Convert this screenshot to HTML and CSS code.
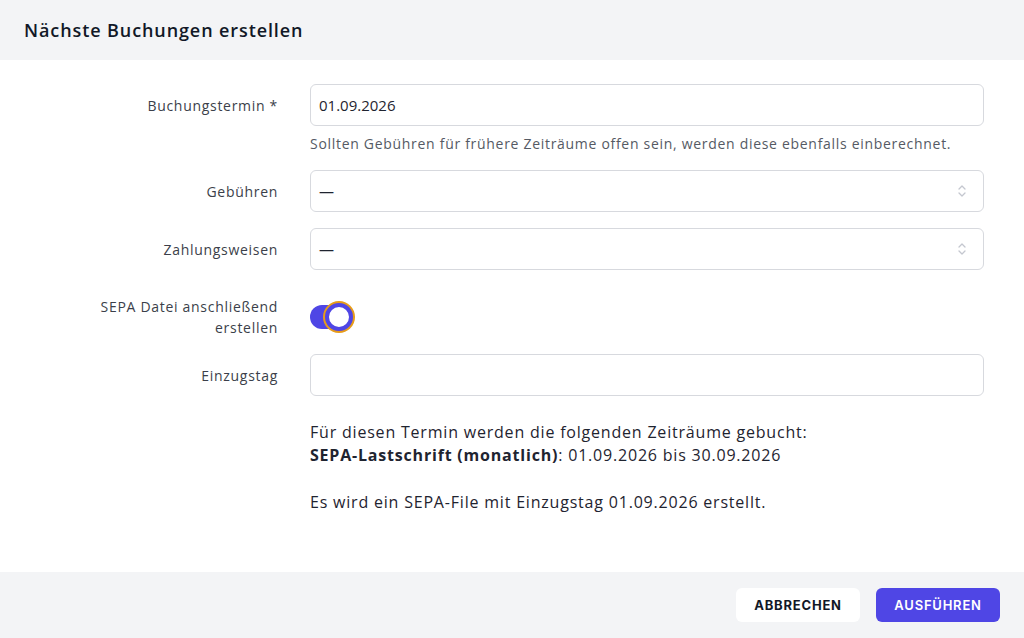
FILE: index.html
```html
<!DOCTYPE html>
<html lang="de">
<head>
  <meta charset="UTF-8">
  <title>Nächste Buchungen erstellen</title>
  <link rel="stylesheet" href="styles.css">
</head>
<body>
  <div class="dialog">
    <header class="dialog-header">
      <h2>Nächste Buchungen erstellen</h2>
    </header>

    <div class="dialog-body">
      <div class="form-row">
        <label class="form-label" for="termin">Buchungstermin *</label>
        <div class="form-field">
          <input id="termin" class="input" type="text" value="01.09.2026">
          <p class="hint">Sollten Gebühren für frühere Zeiträume offen sein, werden diese ebenfalls einberechnet.</p>
        </div>
      </div>

      <div class="form-row">
        <label class="form-label">Gebühren</label>
        <div class="form-field">
          <div class="select">
            <span>—</span>
            <svg class="chevrons" width="10" height="16" viewBox="0 0 10 16">
              <path d="M2 6 L5 3 L8 6" fill="none" stroke="#c4c7cf" stroke-width="1.3" stroke-linecap="round" stroke-linejoin="round"/>
              <path d="M2 10 L5 13 L8 10" fill="none" stroke="#c4c7cf" stroke-width="1.3" stroke-linecap="round" stroke-linejoin="round"/>
            </svg>
          </div>
        </div>
      </div>

      <div class="form-row">
        <label class="form-label">Zahlungsweisen</label>
        <div class="form-field">
          <div class="select">
            <span>—</span>
            <svg class="chevrons" width="10" height="16" viewBox="0 0 10 16">
              <path d="M2 6 L5 3 L8 6" fill="none" stroke="#c4c7cf" stroke-width="1.3" stroke-linecap="round" stroke-linejoin="round"/>
              <path d="M2 10 L5 13 L8 10" fill="none" stroke="#c4c7cf" stroke-width="1.3" stroke-linecap="round" stroke-linejoin="round"/>
            </svg>
          </div>
        </div>
      </div>

      <div class="form-row toggle-row">
        <label class="form-label">SEPA Datei anschließend<br>erstellen</label>
        <div class="form-field">
          <span class="toggle">
            <span class="toggle-knob"></span>
          </span>
        </div>
      </div>

      <div class="form-row">
        <label class="form-label">Einzugstag</label>
        <div class="form-field">
          <input class="input" type="text" value="">
        </div>
      </div>

      <div class="form-row summary-row">
        <div></div>
        <div class="summary">
          <p>Für diesen Termin werden die folgenden Zeiträume gebucht:<br>
            <strong>SEPA-Lastschrift (monatlich)</strong>: 01.09.2026 bis 30.09.2026</p>
          <p>Es wird ein SEPA-File mit Einzugstag 01.09.2026 erstellt.</p>
        </div>
      </div>
    </div>

    <footer class="dialog-footer">
      <button class="btn btn-secondary">Abbrechen</button>
      <button class="btn btn-primary">Ausführen</button>
    </footer>
  </div>
</body>
</html>
```

FILE: styles.css
```css
/* Reset */
* {
  box-sizing: border-box;
  margin: 0;
  padding: 0;
}
body {
  font-family: 'Open Sans', 'DejaVu Sans', sans-serif;
  background: #ffffff;
  color: #1f2430;
  width: 1024px;
  height: 638px;
  overflow: hidden;
}
.dialog {
  display: flex;
  flex-direction: column;
  height: 638px;
}
/* Header */
.dialog-header {
  background: #f3f4f6;
  height: 60px;
  display: flex;
  align-items: center;
  padding: 0 24px;
}
.dialog-header h2 {
  font-size: 18px;
  font-weight: 600;
  letter-spacing: 0.05em;
  color: #111827;
}
/* Body */
.dialog-body {
  flex: 1;
  padding: 24px 40px 0 24px;
}
.form-row {
  display: grid;
  grid-template-columns: 254px 1fr;
  column-gap: 32px;
  margin-bottom: 16px;
}
.form-label {
  text-align: right;
  font-size: 14px;
  letter-spacing: 0.05em;
  color: #3b3f4a;
  line-height: 21px;
  padding-top: 11px;
}
.input,
.select {
  width: 100%;
  height: 42px;
  border: 1px solid #d7d9de;
  border-radius: 6px;
  padding: 0 8px;
  font-family: inherit;
  font-size: 15px;
  color: #1f2430;
  background: #fff;
}
.select {
  display: flex;
  align-items: center;
  justify-content: space-between;
  padding-right: 16px;
}
.hint {
  font-size: 14px;
  letter-spacing: 0.05em;
  color: #555a64;
  margin-top: 8px;
  line-height: 20px;
}
/* Toggle */
.toggle-row {
  margin-top: 26px;
  margin-bottom: 16px;
}
.toggle-row .form-label {
  padding-top: 0;
}
.toggle-row .form-field {
  display: flex;
  align-items: center;
}
.toggle {
  position: relative;
  display: inline-block;
  width: 40px;
  height: 24px;
  border-radius: 12px;
  background: #4f46e5;
}
.toggle-knob {
  position: absolute;
  top: -2px;
  left: 15px;
  width: 28px;
  height: 28px;
  border-radius: 50%;
  background: #fff;
  border: 4px solid #4f46e5;
  box-shadow: 0 0 0 2px #e79c1a;
}
/* Summary */
.summary-row {
  margin-top: 25px;
}
.summary {
  font-size: 16px;
  letter-spacing: 0.05em;
  line-height: 23px;
  color: #1f2430;
}
.summary p + p {
  margin-top: 24px;
}
/* Footer */
.dialog-footer {
  background: #f3f4f6;
  height: 66px;
  display: flex;
  justify-content: flex-end;
  align-items: center;
  gap: 16px;
  padding: 0 24px;
}
.btn {
  width: 124px;
  height: 34px;
  border: none;
  border-radius: 6px;
  font-family: 'Inter', sans-serif;
  font-size: 13px;
  font-weight: 700;
  letter-spacing: 0.06em;
  text-transform: uppercase;
  cursor: pointer;
}
.btn-secondary {
  background: #fff;
  color: #111827;
}
.btn-primary {
  background: #4f46e5;
  color: #fff;
  font-weight: 600;
}
```
